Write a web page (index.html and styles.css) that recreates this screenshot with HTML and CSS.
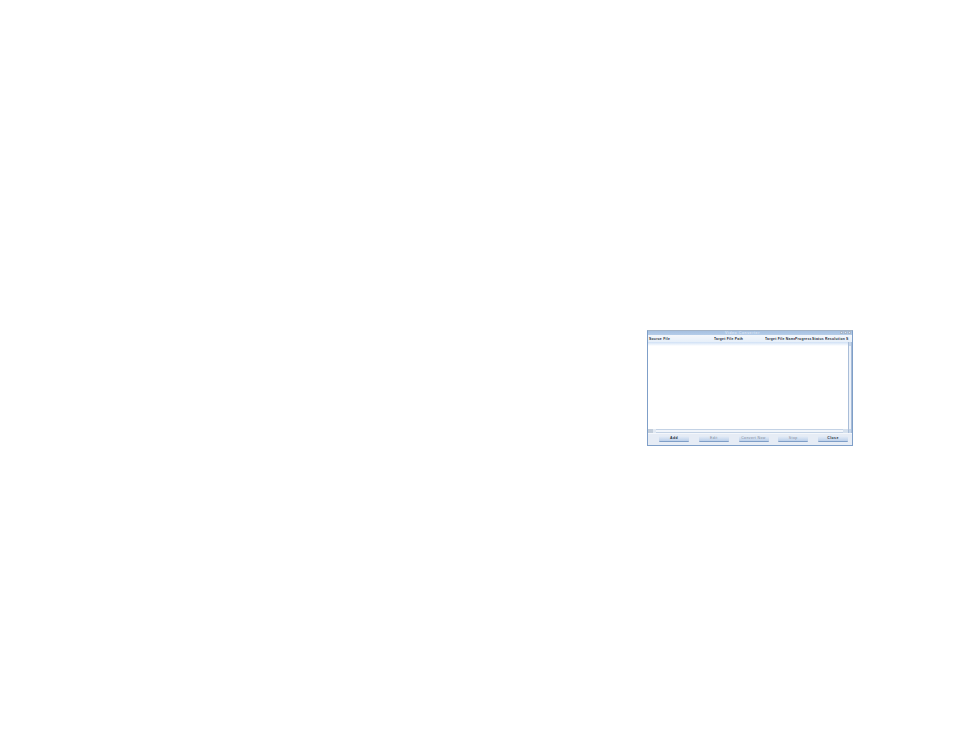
FILE: index.html
```html
<!DOCTYPE html>
<html lang="en">
<head>
    <meta charset="UTF-8">
    <title>Video Converter</title>
    <link rel="stylesheet" href="styles.css">
</head>
<body>
    <div class="window">
        <div class="titlebar">
            <span class="title">Video Converter</span>
            <div class="win-buttons">
                <span class="win-btn"></span>
                <span class="win-btn"></span>
                <span class="win-btn"></span>
            </div>
        </div>
        <div class="table-head">
            <span class="col col-source">Source File</span>
            <span class="col col-path">Target File Path</span>
            <span class="col col-name">Target File Name</span>
            <span class="col col-progress">Progress</span>
            <span class="col col-status">Status</span>
            <span class="col col-res">Resolution</span>
            <span class="col col-last">S</span>
        </div>
        <div class="table-body">
            <div class="list">
                <div class="list-area"></div>
                <div class="hscroll">
                    <span class="arrow"></span>
                    <span class="hthumb"></span>
                    <span class="arrow arrow-end"></span>
                </div>
            </div>
            <div class="vscroll">
                <span class="vbtn"></span>
                <span class="vthumb"></span>
                <span class="vbtn"></span>
            </div>
        </div>
        <div class="actions">
            <button class="btn btn-on">Add</button>
            <button class="btn">Edit</button>
            <button class="btn">Convert Now</button>
            <button class="btn">Stop</button>
            <button class="btn btn-on">Close</button>
        </div>
    </div>
</body>
</html>
```

FILE: styles.css
```css
* {
    margin: 0;
    padding: 0;
    box-sizing: border-box;
    font-family: "Liberation Sans", sans-serif;
}

body {
    background: #fff;
    padding: 330px 0 0 647px;
}

.window {
    width: 206px;
    height: 116px;
    display: flex;
    flex-direction: column;
    background: #e6ecf5;
    border: 1px solid #7f9fc8;
    border-top-color: #a3b3c6;
}

.titlebar {
    height: 4px;
    display: flex;
    align-items: center;
    justify-content: center;
    padding-right: 15px;
    position: relative;
    background: linear-gradient(#a6c0e0, #b5cde9);
}

.title {
    font-size: 3.6px;
    color: #e4eefa;
    letter-spacing: 0.6px;
}

.win-buttons {
    position: absolute;
    right: 1px;
    top: 0;
    display: flex;
    gap: 1px;
}

.win-btn {
    width: 3px;
    height: 3px;
    background: #dce5f0;
    border: 1px solid #a9b7c8;
}

.table-head {
    height: 7px;
    display: flex;
    align-items: center;
    background: linear-gradient(#f4f7fb, #e6eff9);
}

.col {
    font-size: 3.4px;
    font-weight: bold;
    color: #232c37;
    letter-spacing: 0.25px;
    white-space: nowrap;
    overflow: hidden;
}

.col-source {
    width: 66px;
    padding-left: 1px;
}

.col-path {
    width: 51px;
}

.col-name {
    width: 30px;
}

.col-progress {
    width: 17px;
}

.col-status {
    width: 13px;
}

.col-res {
    width: 21px;
}

.col-last {
    width: 5px;
}

.table-body {
    flex: 1;
    display: flex;
    min-height: 0;
}

.list {
    flex: 1;
    display: flex;
    flex-direction: column;
}

.list-area {
    flex: 1;
    background: linear-gradient(#cfe0f5, #fff 4px);
}

.hscroll {
    height: 4px;
    display: flex;
    background: #e3eaf3;
}

.hthumb {
    flex: 1;
    margin-left: 3px;
    background: #f1f5fa;
    border-top: 1px solid #c3d2e5;
    border-bottom: 1px solid #c3d2e5;
}

.arrow {
    width: 5px;
    height: 4px;
    background: #c3cedb;
}

.arrow-end {
    background: #d5e0ed;
}

.vscroll {
    width: 4px;
    display: flex;
    flex-direction: column;
    background: #e3ebf6;
    border-left: 1px solid #a9bdd8;
    border-right: 1px solid #a9bdd8;
}

.vbtn {
    height: 4px;
    background: #c6d6ea;
}

.vthumb {
    flex: 1;
    background: #eef3fa;
}

.actions {
    height: 12px;
    display: flex;
    align-items: center;
    justify-content: space-between;
    padding: 0 4px 2px 11px;
    background: #e6ecf5;
    border-top: 1px solid #f4f7fb;
}

.btn {
    width: 30px;
    height: 6px;
    font-size: 3.5px;
    color: #7f8a99;
    letter-spacing: 0.4px;
    background: linear-gradient(#e6edf7, #bcd0ea);
    border: none;
    border-bottom: 1px solid #7f9fc8;
    border-radius: 1px;
}

.btn-on {
    font-weight: bold;
    color: #232c37;
}
```
